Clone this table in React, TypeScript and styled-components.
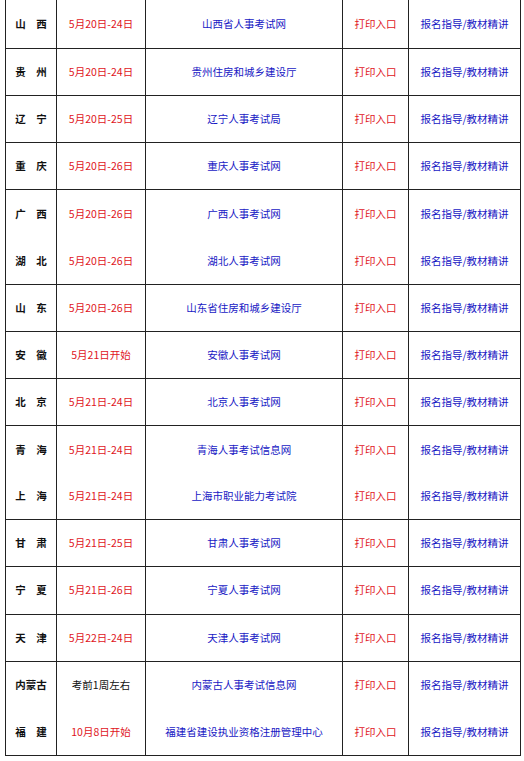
import styled, { createGlobalStyle } from "styled-components";

const GlobalStyle = createGlobalStyle`
  html, body {
    margin: 0;
    padding: 0;
    background: #ffffff;
  }
  body {
    font-family: "Noto Sans CJK SC", "Noto Sans", sans-serif;
  }
`;

type Row = {
  province: string;
  date: string;
  dateBlack?: boolean;
  site: string;
  joined?: boolean;
};

const rows: Row[] = [
  { province: "山　西", date: "5月20日-24日", site: "山西省人事考试网" },
  { province: "贵　州", date: "5月20日-24日", site: "贵州住房和城乡建设厅" },
  { province: "辽　宁", date: "5月20日-25日", site: "辽宁人事考试局" },
  { province: "重　庆", date: "5月20日-26日", site: "重庆人事考试网" },
  { province: "广　西", date: "5月20日-26日", site: "广西人事考试网", joined: true },
  { province: "湖　北", date: "5月20日-26日", site: "湖北人事考试网" },
  { province: "山　东", date: "5月20日-26日", site: "山东省住房和城乡建设厅" },
  { province: "安　徽", date: "5月21日开始", site: "安徽人事考试网" },
  { province: "北　京", date: "5月21日-24日", site: "北京人事考试网" },
  { province: "青　海", date: "5月21日-24日", site: "青海人事考试信息网", joined: true },
  { province: "上　海", date: "5月21日-24日", site: "上海市职业能力考试院" },
  { province: "甘　肃", date: "5月21日-25日", site: "甘肃人事考试网" },
  { province: "宁　夏", date: "5月21日-26日", site: "宁夏人事考试网" },
  { province: "天　津", date: "5月22日-24日", site: "天津人事考试网" },
  { province: "内蒙古", date: "考前1周左右", dateBlack: true, site: "内蒙古人事考试信息网", joined: true },
  { province: "福　建", date: "10月8日开始", site: "福建省建设执业资格注册管理中心" },
];

const widths = [51, 89, 197, 66, 112];

const App = () => {
  return (
    <>
      <GlobalStyle />
      <Table>
        <tbody>
          {rows.map((row, i) => (
            <TableRow key={row.province} $first={i === 0}>
              <Cell $w={widths[0]} $open={row.joined}>
                <Province>{row.province}</Province>
              </Cell>
              <Cell $w={widths[1]} $open={row.joined}>
                <DateText $black={row.dateBlack}>{row.date}</DateText>
              </Cell>
              <Cell $w={widths[2]} $open={row.joined}>
                <BlueLink>{row.site}</BlueLink>
              </Cell>
              <Cell $w={widths[3]} $open={row.joined}>
                <RedLink>打印入口</RedLink>
              </Cell>
              <Cell $w={widths[4]} $open={row.joined}>
                <BlueLink>报名指导/教材精讲</BlueLink>
              </Cell>
            </TableRow>
          ))}
        </tbody>
      </Table>
    </>
  );
};

export default App;

const Table = styled.table`
  margin-left: 5px;
  border-collapse: separate;
  border-spacing: 0;
  border-left: 1px solid #222;
  table-layout: fixed;
  width: 516px;
`;

const TableRow = styled.tr<{ $first?: boolean }>`
  height: ${(p) => (p.$first ? "49px" : "47.14px")};
`;

const Cell = styled.td<{ $w: number; $open?: boolean }>`
  box-sizing: border-box;
  width: ${(p) => p.$w}px;
  padding: 0;
  text-align: center;
  vertical-align: middle;
  border-right: 1px solid #222;
  border-bottom: ${(p) => (p.$open ? "none" : "1px solid #222")};
  font-size: 10.5px;
  line-height: 14px;
  white-space: nowrap;
`;

const Province = styled.span`
  color: #111;
  font-weight: bold;
`;

const DateText = styled.span<{ $black?: boolean }>`
  color: ${(p) => (p.$black ? "#111" : "#e0141c")};
`;

const BlueLink = styled.span`
  color: #1818c4;
`;

const RedLink = styled.span`
  color: #e0141c;
`;
